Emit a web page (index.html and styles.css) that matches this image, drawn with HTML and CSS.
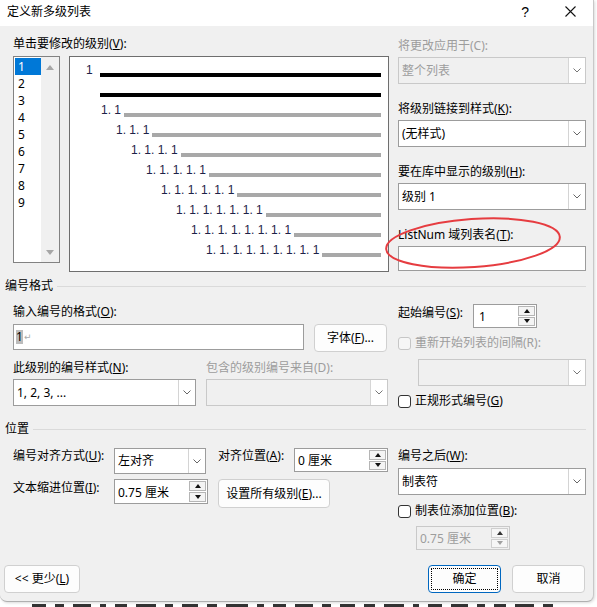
FILE: index.html
```html
<!DOCTYPE html>
<html lang="zh-CN">
<head>
<meta charset="utf-8">
<title>定义新多级列表</title>
<link rel="stylesheet" href="styles.css">
</head>
<body>
<div class="screen">
  <div class="dialog">
    <div class="titlebar">
      <span class="title">定义新多级列表</span>
      <span class="help">?</span>
      <span class="close"><svg width="11" height="11" viewBox="0 0 11 11"><path d="M0.5 0.5L10.5 10.5M10.5 0.5L0.5 10.5" stroke="#111" stroke-width="1.1" fill="none"/></svg></span>
    </div>
    <div class="content">
      <div class="top">
        <div class="top-left">
          <div class="lbl">单击要修改的级别(<u>V</u>):</div>
          <div class="levels">
            <div class="level-list">
              <div class="items">
                <div class="item sel">1</div>
                <div class="item">2</div>
                <div class="item">3</div>
                <div class="item">4</div>
                <div class="item">5</div>
                <div class="item">6</div>
                <div class="item">7</div>
                <div class="item">8</div>
                <div class="item">9</div>
              </div>
              <div class="vscroll"><span class="arr-up"></span><span class="arr-down"></span></div>
            </div>
            <div class="preview">
              <div class="pv-row p1"><span class="num">1</span><span class="bar black first"></span></div>
              <div class="pv-row p1b"><span class="bar black"></span></div>
              <div class="pv-row p2"><span class="num">1. 1</span><span class="bar"></span></div>
              <div class="pv-row p3"><span class="num">1. 1. 1</span><span class="bar"></span></div>
              <div class="pv-row p4"><span class="num">1. 1. 1. 1</span><span class="bar"></span></div>
              <div class="pv-row p5"><span class="num">1. 1. 1. 1. 1</span><span class="bar"></span></div>
              <div class="pv-row p6"><span class="num">1. 1. 1. 1. 1. 1</span><span class="bar"></span></div>
              <div class="pv-row p7"><span class="num">1. 1. 1. 1. 1. 1. 1</span><span class="bar"></span></div>
              <div class="pv-row p8"><span class="num">1. 1. 1. 1. 1. 1. 1. 1</span><span class="bar"></span></div>
              <div class="pv-row p9"><span class="num">1. 1. 1. 1. 1. 1. 1. 1. 1</span><span class="bar"></span></div>
            </div>
          </div>
        </div>
        <div class="top-right">
          <div class="field">
            <div class="lbl dis">将更改应用于(C):</div>
            <div class="select disabled"><span class="val">整个列表</span><span class="dd"><svg width="8" height="5" viewBox="0 0 8 5"><path d="M0.5 0.5L4 4L7.5 0.5" stroke="#777" fill="none"/></svg></span></div>
          </div>
          <div class="field">
            <div class="lbl">将级别链接到样式(<u>K</u>):</div>
            <div class="select"><span class="val">(无样式)</span><span class="dd"><svg width="8" height="5" viewBox="0 0 8 5"><path d="M0.5 0.5L4 4L7.5 0.5" stroke="#666" fill="none"/></svg></span></div>
          </div>
          <div class="field">
            <div class="lbl">要在库中显示的级别(<u>H</u>):</div>
            <div class="select"><span class="val">级别 1</span><span class="dd"><svg width="8" height="5" viewBox="0 0 8 5"><path d="M0.5 0.5L4 4L7.5 0.5" stroke="#666" fill="none"/></svg></span></div>
          </div>
          <div class="field">
            <div class="lbl">ListNum 域列表名(<u>T</u>):</div>
            <div class="textbox"></div>
          </div>
        </div>
      </div>

      <div class="legend fmt-legend"><span>编号格式</span><span class="line"></span></div>

      <div class="mid">
        <div class="mid-left">
          <div class="lbl gap4">输入编号的格式(<u>O</u>):</div>
          <div class="row-input">
            <div class="fmt-input"><span class="hl">1</span><span class="ret">↵</span></div>
            <div class="btn font-btn">字体(<u>F</u>)...</div>
          </div>
          <div class="pair labels2">
            <div class="lbl">此级别的编号样式(<u>N</u>):</div>
            <div class="lbl dis">包含的级别编号来自(D):</div>
          </div>
          <div class="pair selects2">
            <div class="select"><span class="val">1, 2, 3, ...</span><span class="dd"><svg width="8" height="5" viewBox="0 0 8 5"><path d="M0.5 0.5L4 4L7.5 0.5" stroke="#666" fill="none"/></svg></span></div>
            <div class="select disabled"><span class="val"></span><span class="dd"><svg width="8" height="5" viewBox="0 0 8 5"><path d="M0.5 0.5L4 4L7.5 0.5" stroke="#777" fill="none"/></svg></span></div>
          </div>
        </div>
        <div class="mid-right">
          <div class="start-row">
            <div class="lbl start-lbl">起始编号(<u>S</u>):</div>
            <div class="spin start-spin"><span class="val">1</span><span class="btns"><span class="sb"><span class="t-up"></span></span><span class="sb"><span class="t-down"></span></span></span></div>
          </div>
          <div class="chk-row r1"><span class="chk dis"></span><span class="lbl dis">重新开始列表的间隔(R):</span></div>
          <div class="select disabled restart-sel"><span class="val"></span><span class="dd"><svg width="8" height="5" viewBox="0 0 8 5"><path d="M0.5 0.5L4 4L7.5 0.5" stroke="#777" fill="none"/></svg></span></div>
          <div class="chk-row r2"><span class="chk"></span><span class="lbl">正规形式编号(<u>G</u>)</span></div>
        </div>
      </div>

      <div class="legend pos-legend"><span>位置</span><span class="line"></span></div>

      <div class="bottom">
        <div class="bottom-left">
          <div class="brow">
            <div class="lbl w101">编号对齐方式(<u>U</u>):</div>
            <div class="select align-sel"><span class="val">左对齐</span><span class="dd"><svg width="8" height="5" viewBox="0 0 8 5"><path d="M0.5 0.5L4 4L7.5 0.5" stroke="#666" fill="none"/></svg></span></div>
            <div class="lbl w76 ml12">对齐位置(<u>A</u>):</div>
            <div class="spin s94 h24"><span class="val">0 厘米</span><span class="btns"><span class="sb"><span class="t-up"></span></span><span class="sb"><span class="t-down"></span></span></span></div>
          </div>
          <div class="brow row2">
            <div class="lbl w101 pt1">文本缩进位置(<u>I</u>):</div>
            <div class="spin s94 h25"><span class="val">0.75 厘米</span><span class="btns"><span class="sb"><span class="t-up"></span></span><span class="sb"><span class="t-down"></span></span></span></div>
            <div class="btn setall">设置所有级别(<u>E</u>)...</div>
          </div>
        </div>
        <div class="bottom-right">
          <div class="lbl gap4">编号之后(<u>W</u>):</div>
          <div class="select"><span class="val">制表符</span><span class="dd"><svg width="8" height="5" viewBox="0 0 8 5"><path d="M0.5 0.5L4 4L7.5 0.5" stroke="#666" fill="none"/></svg></span></div>
          <div class="chk-row r3"><span class="chk"></span><span class="lbl">制表位添加位置(<u>B</u>):</span></div>
          <div class="spin disabled tab-spin"><span class="val">0.75 厘米</span><span class="btns"><span class="sb"><span class="t-up"></span></span><span class="sb"><span class="t-down"></span></span></span></div>
        </div>
      </div>

      <div class="footer">
        <div class="btn less">&lt;&lt; 更少(<u>L</u>)</div>
        <div class="btn ok">确定</div>
        <div class="btn cancel">取消</div>
      </div>
    </div>
  </div>
  <div class="doc" aria-hidden="true">
    <i class="m w14"></i><i class="m w9"></i><i class="m w18"></i><i class="m w6"></i><i class="m w12"></i><i class="m w20"></i><i class="m w8"></i><i class="m w16"></i><i class="m w10"></i><i class="m w22"></i><i class="m w7"></i><i class="m w13"></i><i class="m w18"></i><i class="m w9"></i><i class="m w15"></i><i class="m w11"></i><i class="m w20"></i><i class="m w6"></i><i class="m w14"></i><i class="m w17"></i><i class="m w8"></i><i class="m w12"></i><i class="m w19"></i><i class="m w10"></i>
  </div>
  <svg class="annot" width="190" height="64" viewBox="0 0 190 64"><ellipse cx="93" cy="31" rx="87" ry="24" transform="rotate(-4 93 31)" fill="none" stroke="#e63c40" stroke-width="2"/></svg>
</div>
</body>
</html>
```
FILE: styles.css
```css
* { box-sizing: border-box; }
body {
  margin: 0;
  font-family: "Noto Sans", "Noto Sans CJK SC", sans-serif;
  font-size: 12px;
  color: #000;
  background: #fff;
}
u { text-decoration: underline; text-underline-offset: 1px; }

.screen {
  width: 597px;
  height: 607px;
  overflow: hidden;
  position: relative;
  background: #fff;
}
.dialog {
  width: 594px;
  height: 602px;
  background: #f0f0f0;
  border-right: 1px solid #c8c8c8;
  border-bottom: 1px solid #b0b0b0;
  border-bottom-left-radius: 7px;
  border-bottom-right-radius: 7px;
  display: flex;
  flex-direction: column;
  box-shadow: 1px 1px 3px rgba(0,0,0,0.15);
}
.titlebar {
  height: 26px;
  flex: none;
  background: #fff;
  display: flex;
  align-items: center;
  padding: 0 0 3px 7px;
}
.title { line-height: 16px; }
.help {
  margin-left: auto;
  margin-right: 36px;
  font-size: 14px;
  line-height: 16px;
  font-family: "Liberation Sans", sans-serif;
}
.close { display: flex; margin-right: 17px; }

.content {
  flex: 1;
  display: flex;
  flex-direction: column;
  padding: 10px 7px 8px 13px;
}
.lbl { line-height: 16px; height: 16px; white-space: nowrap; }
.dis { color: #9d9d9d; }
.gap4 { margin-bottom: 4px; }

/* top */
.top { display: flex; gap: 9px; }
.top-left { width: 376px; }
.top-left > .lbl { margin-bottom: 4px; }
.levels { display: flex; gap: 9px; align-items: flex-start; }
.level-list {
  width: 47px;
  height: 207px;
  border: 1px solid #828282;
  background: #fff;
  display: flex;
}
.items { width: 27px; padding: 1px 0 0 1px; }
.item { height: 17px; line-height: 17px; padding-left: 3px; }
.item.sel { background: #0078d7; color: #fff; }
.vscroll {
  flex: 1;
  background: #f0f0f0;
  display: flex;
  flex-direction: column;
  justify-content: space-between;
  align-items: center;
  padding: 8px 0 7px;
}
.arr-up { width: 0; height: 0; border-left: 4px solid transparent; border-right: 4px solid transparent; border-bottom: 5px solid #a6a6a6; }
.arr-down { width: 0; height: 0; border-left: 4px solid transparent; border-right: 4px solid transparent; border-top: 5px solid #a6a6a6; }

.preview {
  width: 320px;
  height: 216px;
  border: 1px solid #6e6e6e;
  background: #fff;
  padding-right: 7px;
}
.pv-row { height: 20px; display: flex; align-items: flex-end; }
.num {
  font-family: "Liberation Sans", sans-serif;
  font-size: 12px;
  line-height: 11px;
  margin-bottom: 1px;
  color: #1d2248;
  white-space: pre;
}
.bar { flex: 1; height: 4px; background: #a8a8a8; margin-left: 3px; }
.bar.black { background: #000; }
.bar.first { margin-left: 7px; }
.p1 { padding-left: 16px; }
.p1b { padding-left: 30px; }
.p1b .bar { margin-left: 0; }
.p2 { padding-left: 31px; }
.p3 { padding-left: 46px; }
.p4 { padding-left: 61px; }
.p5 { padding-left: 76px; }
.p6 { padding-left: 91px; }
.p7 { padding-left: 106px; }
.p8 { padding-left: 121px; }
.p9 { padding-left: 136px; }

.top-right { width: 188px; padding-top: 2px; display: flex; flex-direction: column; }
.field .lbl { margin-bottom: 3px; }
.field + .field { margin-top: 17px; }

.select {
  display: flex;
  height: 27px;
  border: 1px solid #9c9c9c;
  background: #fff;
}
.select .val { flex: 1; padding-left: 3px; line-height: 25px; white-space: nowrap; overflow: hidden; }
.select .dd {
  width: 17px;
  border-left: 1px solid #d4d4d4;
  background: #fff;
  display: flex;
  align-items: center;
  justify-content: center;
}
.select.disabled { background: #f0f0f0; border-color: #c9c9c9; color: #9d9d9d; }
.select.disabled .dd { border-left-color: #d6d6d6; }
.textbox { height: 25px; border: 1px solid #9c9c9c; background: #fff; }

/* legends */
.legend { display: flex; align-items: center; margin-left: -8px; height: 16px; line-height: 16px; }
.legend .line { flex: 1; height: 1px; background: #dadada; margin-left: 4px; }
.fmt-legend { margin-top: 6px; }
.pos-legend { margin-top: 12px; }

/* mid */
.mid { display: flex; gap: 10px; margin-top: 10px; }
.mid-left { width: 375px; }
.row-input { display: flex; gap: 10px; align-items: flex-start; }
.fmt-input {
  width: 291px;
  height: 26px;
  border: 1px solid #9c9c9c;
  background: #fff;
  padding-left: 2px;
  display: flex;
  align-items: center;
}
.hl { background: #bcbcbc; line-height: 14px; }
.ret { font-family: "DejaVu Sans", sans-serif; font-size: 9px; color: #aaa; margin-left: 1px; }
.btn {
  height: 28px;
  border: 1px solid #d0d0d0;
  border-radius: 4px;
  background: #fdfdfd;
  display: flex;
  align-items: center;
  justify-content: center;
  line-height: 16px;
  white-space: nowrap;
}
.font-btn { width: 73px; }
.pair { display: grid; grid-template-columns: 183px 182px; column-gap: 10px; }
.labels2 { margin-top: 8px; }
.selects2 { margin-top: 3px; }

.mid-right { width: 188px; }
.start-row { display: flex; align-items: flex-start; }
.start-lbl { width: 75px; margin-top: 1px; }
.spin { display: flex; border: 1px solid #9c9c9c; background: #fff; }
.spin .val { flex: 1; padding-left: 3px; display: flex; align-items: center; white-space: nowrap; }
.spin .btns { width: 18px; display: flex; flex-direction: column; gap: 1px; padding: 1px 1px 1px 0; }
.spin .sb {
  flex: 1;
  border: 1px solid #b5b5b5;
  background: #f4f4f4;
  display: flex;
  align-items: center;
  justify-content: center;
}
.t-up { width: 0; height: 0; border-left: 3.5px solid transparent; border-right: 3.5px solid transparent; border-bottom: 4px solid #111; }
.t-down { width: 0; height: 0; border-left: 3.5px solid transparent; border-right: 3.5px solid transparent; border-top: 4px solid #111; }
.start-spin { width: 64px; height: 24px; }
.start-spin .val { padding-left: 5px; }

.chk-row { display: flex; align-items: center; gap: 4px; height: 16px; }
.chk { width: 13px; height: 13px; border: 1px solid #333; border-radius: 3px; background: #fff; flex: none; }
.chk.dis { border-color: #c6c6c6; background: #f6f6f6; }
.r1 { margin-top: 7px; }
.restart-sel { margin-top: 8px; margin-left: 20px; width: 168px; }
.r2 { margin-top: 7px; }

/* bottom */
.bottom { display: flex; gap: 10px; margin-top: 11px; }
.bottom-left { width: 375px; }
.brow { display: flex; align-items: flex-start; }
.row2 { margin-top: 5px; }
.w101 { width: 101px; }
.w76 { width: 76px; }
.ml12 { margin-left: 12px; }
.pt1 { margin-top: 1px; }
.align-sel { width: 92px; height: 26px; }
.align-sel .val { line-height: 24px; }
.s94 { width: 94px; }
.h24 { height: 24px; }
.h25 { height: 25px; }
.setall { width: 112px; height: 29px; margin-left: 10px; }

.bottom-right { width: 188px; }
.r3 { margin-top: 8px; }
.tab-spin { width: 94px; height: 24px; margin-top: 7px; margin-left: 18px; }
.spin.disabled { background: #f0f0f0; border-color: #c9c9c9; color: #9d9d9d; }
.spin.disabled .sb { border-color: #cfcfcf; background: #f6f6f6; }
.spin.disabled .t-up { border-bottom-color: #333; }
.spin.disabled .t-down { border-top-color: #a0a0a0; }

.footer { display: flex; align-items: center; margin-top: auto; margin-left: -9px; }
.less { width: 76px; }
.ok { width: 73px; margin-left: auto; border-color: #0067c0; outline: 1px dotted #000; outline-offset: -4px; }
.cancel { width: 73px; margin-left: 11px; margin-right: 1px; }

/* partially hidden document text below the dialog */
.doc {
  height: 5px;
  overflow: hidden;
  padding: 2px 0 0 32px;
  display: flex;
  gap: 9px;
}
.m { display: block; height: 3px; background: #333; flex: none; }
.w6 { width: 6px; } .w7 { width: 7px; } .w8 { width: 8px; } .w9 { width: 9px; }
.w10 { width: 10px; } .w11 { width: 11px; } .w12 { width: 12px; } .w13 { width: 13px; }
.w14 { width: 14px; } .w15 { width: 15px; } .w16 { width: 16px; } .w17 { width: 17px; }
.w18 { width: 18px; } .w19 { width: 19px; } .w20 { width: 20px; } .w22 { width: 22px; }

.annot { position: absolute; left: 380px; top: 212px; }
```
